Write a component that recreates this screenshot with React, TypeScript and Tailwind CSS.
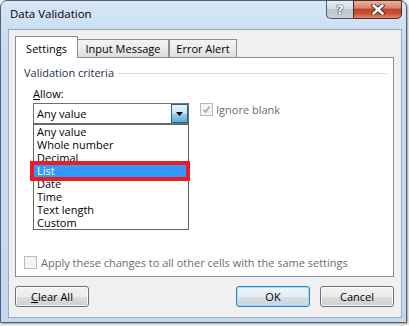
import React from "react";

const items = ["Any value", "Whole number", "Decimal", "List", "Date", "Time", "Text length", "Custom"];

function Arrow() {
  return (
    <svg width="7" height="4" viewBox="0 0 7 4">
      <path d="M0 0H7L3.5 4Z" fill="#000" />
    </svg>
  );
}

export default function App() {
  return (
    <div className="w-[409px] h-[326px] overflow-hidden bg-[#f4f4f4] font-['Open_Sans',sans-serif] text-[11px] leading-[14px] text-black">
      <div className="w-[407px] h-[323px] flex flex-col rounded-t-[7px] border border-[#56606e] bg-[linear-gradient(to_bottom,#d6e6f7,#c8dcf2_40px,#c4d9f1)] shadow-[1px_1px_2px_rgba(0,0,0,0.35)]">
        {/* title bar */}
        <div className="h-[28px] shrink-0 flex items-start">
          <div className="pl-[9px] pt-[5px] text-[11.5px] leading-[16px] text-black">Data Validation</div>
          <div className="ml-auto mr-[4px] -mt-px flex h-[19px]">
            <div className="w-[27px] h-full border border-r-0 border-[#4d5766] rounded-bl-[5px] bg-[linear-gradient(to_bottom,#e6ecf3,#d3dce6_45%,#b9c6d4_50%,#c6d2de)] flex items-center justify-center">
              <span className="text-white font-bold text-[13px] leading-[13px] font-['DejaVu_Sans',sans-serif] [text-shadow:0_0_1px_#2a2f38,0_0_1px_#2a2f38,0_0_1px_#2a2f38]">?</span>
            </div>
            <div className="w-[49px] h-full border border-[#4a2a24] rounded-br-[5px] bg-[linear-gradient(to_bottom,#eab0a2,#d88470_40%,#c4432a_50%,#cc5236_75%,#e08a6e)] flex items-center justify-center">
              <svg width="14" height="11" viewBox="0 0 14 11">
                <path d="M2.5 1.5L11.5 9.5M11.5 1.5L2.5 9.5" stroke="#3d2a26" strokeWidth="4.4" strokeLinecap="round" />
                <path d="M2.5 1.5L11.5 9.5M11.5 1.5L2.5 9.5" stroke="#ffffff" strokeWidth="2.6" strokeLinecap="round" />
              </svg>
            </div>
          </div>
        </div>

        {/* client area */}
        <div className="ml-[7px] w-[394px] h-[289px] border border-[#9aabc0] bg-[#f0f0f0] flex flex-col pt-[6px] pl-[6px] pr-[7px] pb-[10px]">
          {/* tabs */}
          <div className="h-[21px] flex items-end shrink-0">
            <div className="relative z-10 -mb-px w-[63px] h-[22px] bg-white border border-b-0 border-[#898c95] flex items-center justify-center pt-[2px]">
              Settings
            </div>
            <div className="w-[91px] h-[18px] border border-l-0 border-b-0 border-[#898c95] bg-[linear-gradient(to_bottom,#f3f3f3,#ebebeb_50%,#dddddd)] flex items-center justify-center pt-px">
              Input Message
            </div>
            <div className="w-[68px] h-[18px] border border-b-0 border-[#898c95] bg-[linear-gradient(to_bottom,#f3f3f3,#ebebeb_50%,#dddddd)] flex items-center justify-center pt-px">
              Error Alert
            </div>
          </div>

          {/* panel */}
          <div className="h-[220px] shrink-0 border border-[#898c95] bg-white flex flex-col">
            <div className="mt-[7px] h-[16px] flex items-center pl-[8px] pr-[6px]">
              <span className="text-[#1e2f52]">Validation criteria</span>
              <div className="flex-1 ml-[4px] h-px bg-[#d5dfe5]" />
            </div>
            <div className="mt-[6px] h-[14px] pl-[17px]">
              <span className="underline underline-offset-[1px]">A</span>llow:
            </div>
            <div className="mt-[2px] pl-[17px] flex items-start">
              <div className="relative w-[156px] h-[21px]">
                <div className="h-full border border-[#6f6f6f] bg-white flex items-center">
                  <div className="flex-1 pl-[3px]">Any value</div>
                  <div className="w-[17px] h-[19px] border border-[#2c628b] bg-[linear-gradient(to_bottom,#e5f4fc,#c4e5f6_50%,#98d1ef_50%,#5faedb)] flex items-center justify-center">
                    <Arrow />
                  </div>
                </div>
                {/* dropdown list */}
                <div className="absolute left-0 top-[21px] z-20 w-[156px] border border-[#646464] bg-white flex flex-col">
                  {items.map((it) => (
                    <div
                      key={it}
                      className={
                        it === "List"
                          ? "h-[13px] leading-[13px] pl-[3px] bg-[#3399ff] text-white"
                          : "h-[13px] leading-[13px] pl-[3px]"
                      }
                    >
                      {it}
                    </div>
                  ))}
                </div>
                {/* red highlight annotation */}
                <div className="absolute z-30 left-[-3px] top-[58px] w-[160px] h-[20px] border-4 border-[#ed1c24]" />
              </div>
              <div className="ml-[11px] h-[13px] flex items-center gap-[3px] text-[#6d6d6d]">
                <div className="w-[13px] h-[13px] border border-[#b9b9b9] bg-[#f4f4f4] flex items-center justify-center">
                  <svg width="9" height="9" viewBox="0 0 9 9">
                    <path d="M1.5 4.8L3.6 7L7.6 1.5" stroke="#a9a9a9" strokeWidth="1.5" fill="none" />
                  </svg>
                </div>
                <span>Ignore blank</span>
              </div>
            </div>
            <div className="mt-auto mb-[7px] pl-[8px] h-[13px] flex items-center gap-[4px] text-[#6d6d6d]">
              <div className="w-[13px] h-[13px] border border-[#bdbdbd] bg-[#f4f4f4]" />
              <span>Apply these changes to all other cells with the same settings</span>
            </div>
          </div>

          {/* buttons */}
          <div className="mt-[9px] h-[21px] flex shrink-0">
            <div className="w-[74px] h-full rounded-[3px] border border-[#707070] bg-[linear-gradient(to_bottom,#f2f2f2,#ebebeb_50%,#dddddd_50%,#cfcfcf)] shadow-[inset_0_0_0_1px_#fbfbfb] flex items-center justify-center">
              <span>
                <span className="underline underline-offset-[1px]">C</span>lear All
              </span>
            </div>
            <div className="ml-auto w-[74px] h-full rounded-[3px] border border-[#3c7fb1] bg-[linear-gradient(to_bottom,#f0f4f7,#e6ecf0_50%,#d6dfe6_50%,#cad5de)] shadow-[inset_0_0_0_1px_#9fdcf7] flex items-center justify-center">
              OK
            </div>
            <div className="ml-[10px] w-[74px] h-full rounded-[3px] border border-[#707070] bg-[linear-gradient(to_bottom,#f2f2f2,#ebebeb_50%,#dddddd_50%,#cfcfcf)] shadow-[inset_0_0_0_1px_#fbfbfb] flex items-center justify-center">
              Cancel
            </div>
          </div>
        </div>
      </div>
    </div>
  );
}
